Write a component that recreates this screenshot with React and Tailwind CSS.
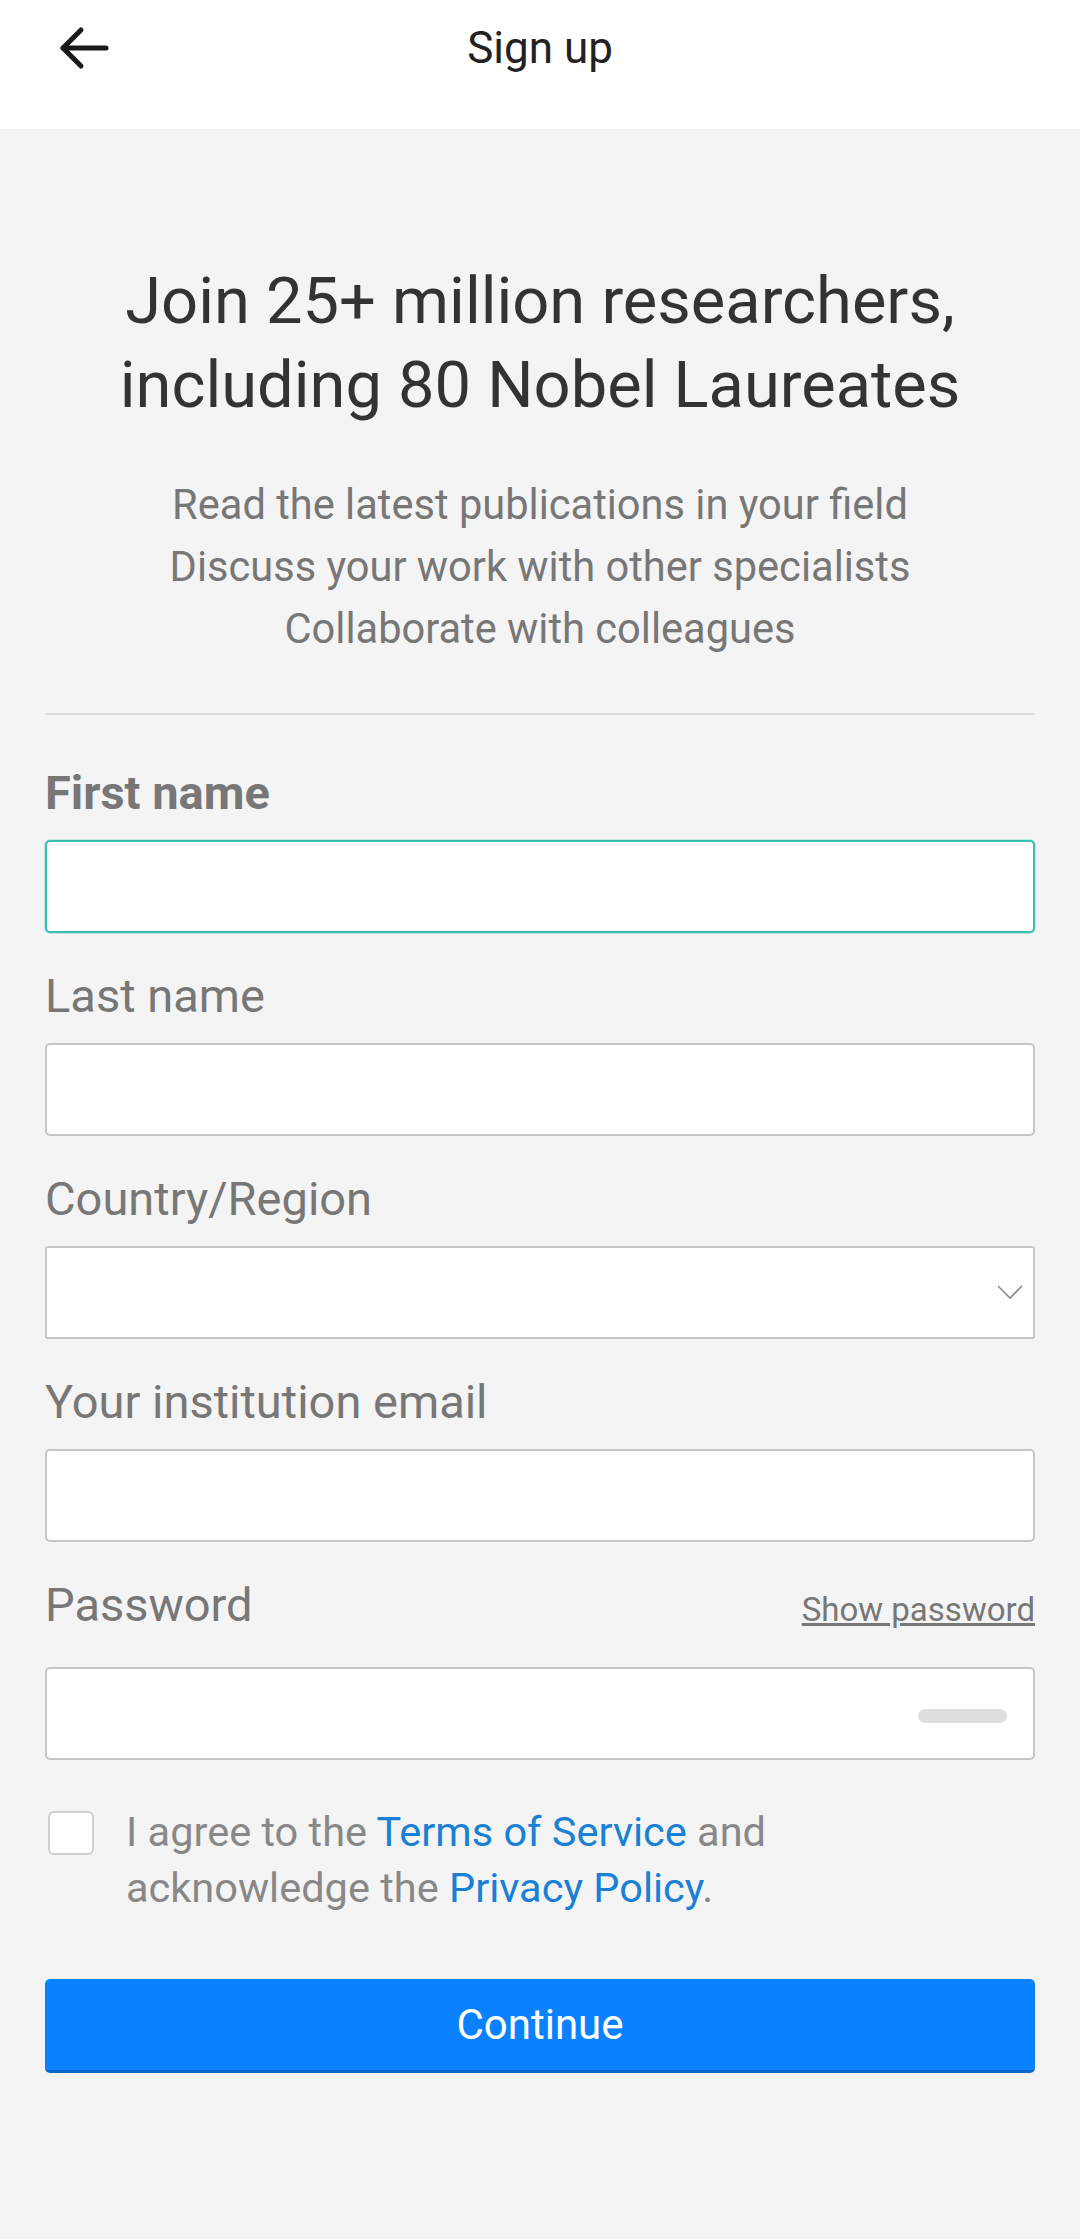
import { useState } from "react";

const Label = ({ children, bold }) => (
  <label className={`block text-[47px] leading-[54px] text-[#777] mb-[20px] ${bold ? "font-bold" : ""}`}>
    {children}
  </label>
);

const TextInput = ({ focused, type = "text" }) => (
  <input
    type={type}
    className={`block w-full h-[93px] rounded-[5px] bg-white px-[24px] text-[42px] text-[#333] outline-none border-2 ${
      focused ? "border-[#3bbdb1] shadow-[0_0_0_1px_rgba(59,189,177,0.25)]" : "border-[#c6c6c6]"
    }`}
  />
);

export default function App() {
  const [agreed, setAgreed] = useState(false);

  return (
    <div className="min-h-screen bg-[#f4f4f4] font-['Roboto',sans-serif]">
      <header className="h-[129px] bg-white">
        <div className="h-[96px] flex items-center">
          <button className="w-[109px] h-full flex items-center pl-[59px]">
            <svg width="50" height="46" viewBox="0 0 50 46" fill="none" stroke="#1a1a1a" strokeWidth="5" strokeLinecap="round" strokeLinejoin="round">
              <path d="M4 23H47" />
              <path d="M22 5L4 23L22 41" />
            </svg>
          </button>
          <h2 className="flex-1 text-center text-[44px] text-[#222]">Sign up</h2>
          <div className="w-[109px]" />
        </div>
      </header>

      <main className="px-[45px] pt-[130px] pb-[40px]">
        <h1 className="text-center text-[65px] leading-[84px] text-[#333]">
          Join 25+ million researchers,
          <br />
          including 80 Nobel Laureates
        </h1>
        <p className="mt-[47px] text-center text-[41.6px] leading-[62px] text-[#777]">
          Read the latest publications in your field
          <br />
          Discuss your work with other specialists
          <br />
          Collaborate with colleagues
        </p>

        <div className="mt-[53px] h-[2px] bg-[#dcdcdc]" />

        <form className="mt-[51px] flex flex-col gap-[36px]" onSubmit={(e) => e.preventDefault()}>
          <div>
            <Label bold>First name</Label>
            <TextInput focused />
          </div>
          <div>
            <Label>Last name</Label>
            <TextInput />
          </div>
          <div>
            <Label>Country/Region</Label>
            <div className="h-[93px] rounded-[3px] border-2 border-[#c6c6c6] bg-white flex items-center justify-end pr-[10px]">
              <svg width="26" height="15" viewBox="0 0 26 15" fill="none" stroke="#8a8a8a" strokeWidth="1.6">
                <path d="M1 1L13 13L25 1" />
              </svg>
            </div>
          </div>
          <div>
            <Label>Your institution email</Label>
            <TextInput type="email" />
          </div>
          <div>
            <div className="flex items-baseline justify-between mb-[32px]">
              <span className="text-[47px] leading-[54px] text-[#777]">Password</span>
              <a href="#" className="text-[33px] text-[#777] underline">Show password</a>
            </div>
            <div className="relative">
              <TextInput type="password" />
              <div className="absolute right-[28px] top-[42px] w-[89px] h-[14px] rounded-full bg-[#dedede]" />
            </div>
          </div>

          <div className="mt-[8px] flex items-start gap-[32px]">
            <button
              type="button"
              onClick={() => setAgreed(!agreed)}
              className="mt-[7px] ml-[3px] w-[46px] h-[44px] shrink-0 rounded-[6px] border-2 border-[#cfcfcf] bg-white"
            />
            <p className="text-[41.5px] leading-[56px] text-[#888]">
              I agree to the <a href="#" className="text-[#1a80d6]">Terms of Service</a> and
              <br />
              acknowledge the <a href="#" className="text-[#1a80d6]">Privacy Policy</a>.
            </p>
          </div>

          <button
            type="submit"
            className="mt-[27px] h-[94px] w-full rounded-[5px] bg-[#0a82ff] border-b-[3px] border-[#0868c9] text-white text-[42px]"
          >
            Continue
          </button>
        </form>
      </main>
    </div>
  );
}
